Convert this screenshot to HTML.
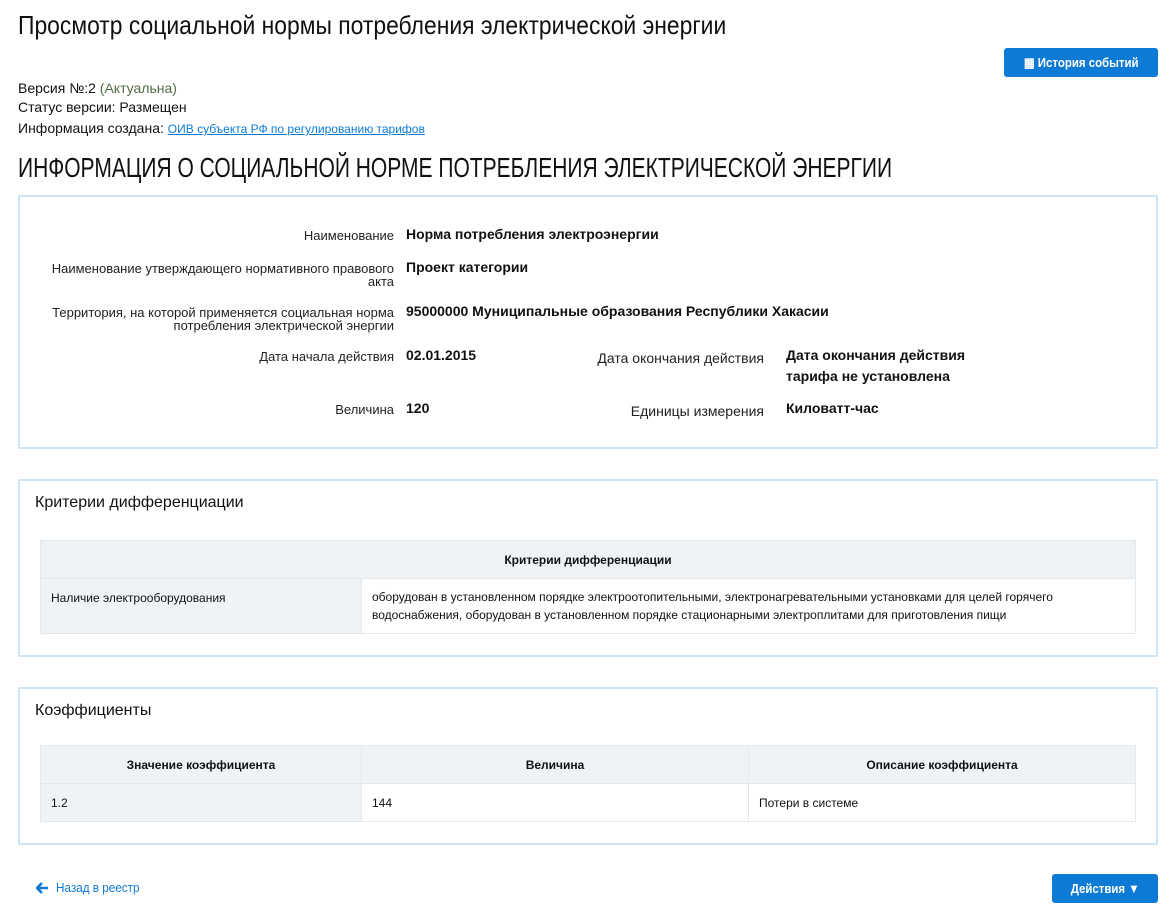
<!DOCTYPE html>
<html><head><meta charset="utf-8"><style>
body{margin:0;background:#fff;font-family:"Liberation Sans",sans-serif;color:#111;width:1176px;height:920px;position:relative;overflow:hidden}
.a{position:absolute;white-space:nowrap}
h1{position:absolute;left:18px;top:10px;margin:0;font-weight:normal;font-size:26px;white-space:nowrap;transform:scaleX(0.88);transform-origin:0 0}
h2{position:absolute;left:18px;top:152px;margin:0;font-weight:normal;font-size:28px;white-space:nowrap;transform:scaleX(0.75);transform-origin:0 0}
.btn{position:absolute;background:#0d7ad6;color:#fff;border-radius:3px;font-size:13px;font-weight:bold;text-align:center;white-space:nowrap}
.panel{position:absolute;left:18px;width:1136px;border:2px solid #cfe3f6;border-radius:2px}
.lbl{position:absolute;text-align:right;font-size:13px;line-height:13px;color:#222}
.val{position:absolute;font-size:14px;font-weight:bold;line-height:21px}
table{position:absolute;left:20px;width:1096px;border-collapse:collapse;font-size:12px}
td,th{border:1px solid #e3e8ee;padding:0 10px}
th{background:#f0f3f6;font-weight:bold;height:37px}
.g{background:#f0f3f6}
</style></head><body>
<h1>Просмотр социальной нормы потребления электрической энергии</h1>
<div class="btn" style="left:1004px;top:48px;width:154px;height:29px;line-height:29px"><span style="display:inline-block;transform:scaleX(0.88)">▦ История событий</span></div>
<div class="a" style="left:18px;top:80px;font-size:14px">Версия №:2 <span style="color:#556b4a">(Актуальна)</span></div>
<div class="a" style="left:18px;top:99px;font-size:14px">Статус версии: Размещен</div>
<div class="a" style="left:18px;top:120px;font-size:14px">Информация создана: <span style="color:#0d7ad6;text-decoration:underline;font-size:12px">ОИВ субъекта РФ по регулированию тарифов</span></div>
<h2>ИНФОРМАЦИЯ О СОЦИАЛЬНОЙ НОРМЕ ПОТРЕБЛЕНИЯ ЭЛЕКТРИЧЕСКОЙ ЭНЕРГИИ</h2>
<div class="panel" style="top:195px;height:250px">
 <div class="lbl" style="right:762px;top:32px">Наименование</div>
 <div class="val" style="left:386px;top:27px">Норма потребления электроэнергии</div>
 <div class="lbl" style="right:762px;top:65px">Наименование утверждающего нормативного правового<br>акта</div>
 <div class="val" style="left:386px;top:60px">Проект категории</div>
 <div class="lbl" style="right:762px;top:109px">Территория, на которой применяется социальная норма<br>потребления электрической энергии</div>
 <div class="val" style="left:386px;top:104px">95000000 Муниципальные образования Республики Хакасии</div>
 <div class="lbl" style="right:762px;top:153px">Дата начала действия</div>
 <div class="val" style="left:386px;top:148px">02.01.2015</div>
 <div class="lbl" style="right:392px;top:155px;font-size:14px">Дата окончания действия</div>
 <div class="val" style="left:766px;top:148px">Дата окончания действия<br>тарифа не установлена</div>
 <div class="lbl" style="right:762px;top:206px">Величина</div>
 <div class="val" style="left:386px;top:201px">120</div>
 <div class="lbl" style="right:392px;top:208px;font-size:14px">Единицы измерения</div>
 <div class="val" style="left:766px;top:201px">Киловатт-час</div>
</div>
<div class="panel" style="top:479px;height:174px">
 <div class="a" style="left:15px;top:13px;font-size:16px">Критерии дифференциации</div>
 <table style="top:59px"><tr><th colspan="2">Критерии дифференциации</th></tr>
 <tr style="height:55px"><td class="g" style="width:300px;vertical-align:top;padding-top:12px">Наличие электрооборудования</td><td style="line-height:18px">оборудован в установленном порядке электроотопительными, электронагревательными установками для целей горячего водоснабжения, оборудован в установленном порядке стационарными электроплитами для приготовления пищи</td></tr></table>
</div>
<div class="panel" style="top:687px;height:154px">
 <div class="a" style="left:15px;top:13px;font-size:16px">Коэффициенты</div>
 <table style="top:56px"><tr><th style="width:300px">Значение коэффициента</th><th style="width:366px">Величина</th><th>Описание коэффициента</th></tr>
 <tr style="height:38px"><td class="g">1.2</td><td>144</td><td>Потери в системе</td></tr></table>
</div>
<svg class="a" style="left:36px;top:882px" width="13" height="12" viewBox="0 0 13 12"><path d="M6 1 L1 6 L6 11 M1 6 H12" stroke="#0d7ad6" stroke-width="2.6" fill="none"/></svg>
<div class="a" style="left:56px;top:880px;font-size:13px;color:#0d7ad6;transform:scaleX(0.9);transform-origin:0 0">Назад в реестр</div>
<div class="btn" style="left:1052px;top:874px;width:106px;height:29px;line-height:29px"><span style="display:inline-block;transform:scaleX(0.88)">Действия ▼</span></div>
</body></html>
